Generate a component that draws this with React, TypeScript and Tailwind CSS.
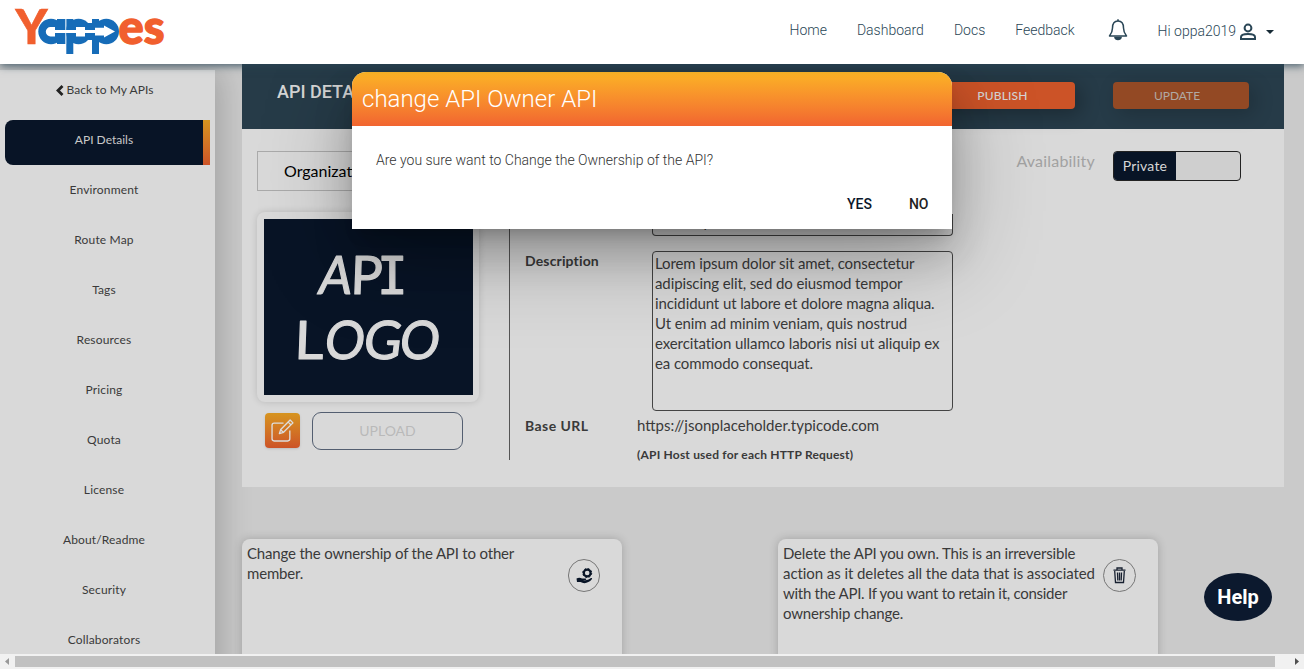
import React from "react";

const navItems = ["Environment", "Route Map", "Tags", "Resources", "Pricing", "Quota", "License", "About/Readme", "Security", "Collaborators"];

function Logo() {
  return (
    <svg width="152" height="50" viewBox="0 0 152 50" className="overflow-visible">
      <g className="font-['Lato',sans-serif] font-black" fill="#f15f2e" stroke="#f15f2e">
        <text x="1.500" y="38.500" fontSize="48" strokeWidth="0.600" textLength="32" lengthAdjust="spacingAndGlyphs">Y</text>
        <text x="104.500" y="38.500" fontSize="47" strokeWidth="1.400" textLength="46" lengthAdjust="spacingAndGlyphs">es</text>
      </g>
      <g fill="#166cb8">
        <circle cx="37" cy="26.500" r="12.700" />
        <rect x="43" y="14" width="8.300" height="25" />
        <rect x="52.300" y="14" width="7" height="35" />
        <circle cx="64.500" cy="26.500" r="12.700" />
        <rect x="78" y="14" width="7" height="35" />
        <circle cx="92.300" cy="26.500" r="12.700" />
        <rect x="70" y="18" width="12" height="17" />
      </g>
      <path d="M51.800 14v25" stroke="#a9cdea" strokeWidth=".8" />
      <path d="M41 22h-4.500a4.700 4.700 0 0 0 0 9.400H41V28h21v3.400h9V28h10v2.500h9V32.500l11-6-11-6v2.200h-9V25H71v-3h-9v3H41Z" fill="#fff" />
    </svg>
  );
}

function Bell() {
  return (
    <svg width="20" height="22" viewBox="0 0 20 22" fill="none" stroke="#2a4656" strokeWidth="1.500">
      <path d="M10 2C6 2 4.500 5 4.500 9c0 4-1 5.500-3 8h17c-2-2.500-3-4-3-8 0-4-1.500-7-5.500-7Z" strokeLinejoin="round" />
      <path d="M10 .3V2M7 18.500c.5 2.500 5.500 2.500 6 0Z" fill="#2a4656" />
    </svg>
  );
}

function EditIcon() {
  return (
    <svg width="23" height="23" viewBox="0 0 22 22" fill="none" stroke="#ddd" strokeWidth="1.300" strokeLinejoin="round">
      <path d="M12 4H3a2 2 0 0 0-2 2v13a2 2 0 0 0 2 2h13a2 2 0 0 0 2-2v-8" />
      <path d="m8 14 1.300-4 9-9 2.700 2.700-9 9L8 14ZM16.500 3l2.500 2.500M9.500 10.500l2 2" />
    </svg>
  );
}

function OwnerIcon() {
  return (
    <svg width="17" height="16" viewBox="0 0 17 16">
      <circle cx="11.200" cy="5" r="3.400" fill="none" stroke="#081426" strokeWidth="2.200" />
      <circle cx="11.200" cy="5" r="4.500" fill="none" stroke="#081426" strokeWidth="1" strokeDasharray="1.800 1.730" />
      <path d="M.5 10.500c2-1 4-.8 5.500 0h3.500c1 0 1 1.500 0 1.500H7c2 .6 4 .3 5.500-.5l2.500-1.500c1-.4 1.500.5.8 1.300C13 15 8 16.300 4.500 14H1Z" fill="#081426" />
    </svg>
  );
}

function TrashIcon() {
  return (
    <svg width="13" height="17" viewBox="0 0 13 17" fill="none" stroke="#172030" strokeWidth="1.300">
      <path d="M.5 3.200h12M4 3V1h5v2M1.700 4l.8 11.500h8L11.300 4M4.500 5.500l.3 8M6.500 5.500v8M8.500 5.500l-.3 8" />
    </svg>
  );
}

function LogoPicture() {
  return (
    <svg width="209" height="176" viewBox="0 0 209 176" fill="#d9d9d9" stroke="#d9d9d9" strokeWidth="1.200" strokeLinejoin="round" className="font-['Lato',sans-serif] text-[53px]">
      <text transform="translate(53 75) skewX(-8)" textLength="33" lengthAdjust="spacingAndGlyphs">A</text>
      <text transform="translate(86 75) skewX(-2)" textLength="32" lengthAdjust="spacingAndGlyphs">P</text>
      <text x="113" y="75" className="font-['DejaVu_Sans_Mono',monospace] text-[51px]">I</text>
      <text transform="translate(30 140) skewX(-2)" textLength="29" lengthAdjust="spacingAndGlyphs">L</text>
      <text transform="translate(59 140) skewX(-7)" textLength="40" lengthAdjust="spacingAndGlyphs">O</text>
      <text transform="translate(98 140) skewX(-7)" textLength="38" lengthAdjust="spacingAndGlyphs">G</text>
      <text transform="translate(134 140) skewX(-7)" textLength="40" lengthAdjust="spacingAndGlyphs">O</text>
    </svg>
  );
}

export default function App() {
  return (
    <div className="relative flex h-[669px] w-[1304px] flex-col overflow-hidden bg-[#cacaca] font-['Lato',sans-serif] text-[#3a3a3a]">
      <header className="relative z-10 flex h-16 shrink-0 items-start justify-between bg-white pl-[14px] pr-[30px] pt-[5px] font-['Roboto',sans-serif] text-sm font-light text-[#2a4656] shadow-[0_2px_8px_rgba(42,70,86,0.8)]">
        <Logo />
        <nav className="flex items-start pt-[15px] leading-5">
          <span className="mr-[30px]">Home</span>
          <span className="mr-[30px]">Dashboard</span>
          <span className="mr-[30px]">Docs</span>
          <span className="mr-[33px]">Feedback</span>
          <span className="-mt-px mr-[30px]"><Bell /></span>
          <span className="mt-px">Hi oppa2019</span>
          <svg className="ml-[3px] mt-[3px]" width="18" height="18" viewBox="0 0 18 18" fill="none" stroke="#2a4656" strokeWidth="2"><circle cx="9" cy="5" r="3.400" /><path d="M2 16v-2c0-4 14-4 14 0v2Z" /></svg>
          <svg className="ml-[9px] mt-[10px]" width="8" height="4" viewBox="0 0 8 4"><path d="M0 0h8L4 4Z" fill="#172b36" /></svg>
        </nav>
      </header>

      <div className="flex min-h-0 flex-1">
        <aside className="-mb-12 mt-[6px] w-[215px] shrink-0 bg-[#d9d9d9] text-center text-[12px] tracking-[0.15px] shadow-[6px_0_30px_rgba(0,0,0,0.2)]">
          <div className="flex h-10 items-center justify-center gap-[2px] pr-[5px] tracking-[0.08px]">
            <svg width="8" height="11" viewBox="0 0 8 11" fill="none" stroke="#222" strokeWidth="2.800"><path d="M6.500 1 2 5.500 6.500 10" /></svg>
            Back to My APIs
          </div>
          <div className="ml-[5px] mt-[10px] flex h-[45px] w-[205px] overflow-hidden rounded-l-lg bg-[#081426] text-[#c9c9c9]">
            <span className="flex-1 pt-[11px] leading-[18px] tracking-normal">API Details</span>
            <span className="w-[7px] bg-linear-to-b from-[#d6941f] to-[#cc5327]" />
          </div>
          <div className="pr-[7px]">
            {navItems.map((item) => <div key={item} className="h-[50px] pt-4 leading-[18px]">{item}</div>)}
          </div>
        </aside>

        <main className="ml-[27px] w-[1042px] shrink-0">
          <section className="h-[423px] bg-[#d9d9d9]">
            <div className="flex h-[65px] items-start bg-[#263b48] pl-[35px] pr-[35px] pt-[18px] font-['Roboto',sans-serif] text-[#d5d5d5]">
              <h1 className="text-[18px] font-medium leading-5">API DETAILS</h1>
              <div className="ml-auto flex gap-[38px] font-['Lato',sans-serif] text-[12px]">
                <button className="h-[27px] w-[145px] rounded bg-[#cc5327] font-medium tracking-[0.15px] shadow-[5px_5px_20px_rgba(0,0,0,0.3)]">PUBLISH</button>
                <button className="h-[27px] w-[136px] rounded bg-[#934924] pr-2 text-[#b1a9a3] shadow-[5px_5px_20px_rgba(0,0,0,0.2)]">UPDATE</button>
              </div>
            </div>
            <div className="flex h-[85px] items-start justify-between pl-[15px] pr-[43px] pt-[22px]">
              <div className="h-10 w-[250px] border border-[#aaa] pl-[26px] text-base leading-[37px] text-black">Organization</div>
              <div className="flex">
                <span className="mr-[18px] text-base leading-5 tracking-[0.2px] text-[#a2a2a2]">Availability</span>
                <div className="flex h-[30px] w-[128px] overflow-hidden rounded border border-[#222] bg-[#cfcfcf] text-sm leading-7"><span className="w-[62px] bg-[#081426] text-center tracking-[0.2px] text-[#d6d6d6]">Private</span></div>
              </div>
            </div>
            <div className="flex">
              <div className="-mt-[2px] ml-[15px] w-[222px]">
                <div className="h-[190px] rounded-lg bg-[#d9d9d9] p-[7px] shadow-[0_0_7px_rgba(0,0,0,0.15)]"><div className="h-[176px] w-[209px] bg-[#081426]"><LogoPicture /></div></div>
                <div className="mt-[10px] flex gap-3 pl-[8px]">
                  <button className="mt-px flex h-[35px] w-[35px] items-center justify-center rounded bg-linear-to-b from-[#d6941f] to-[#cc5327] shadow-sm"><EditIcon /></button>
                  <button className="h-[38px] w-[151px] rounded-[9px] border border-[#535e70] text-sm text-[#b9b9b9]">UPLOAD</button>
                </div>
              </div>
              <div className="ml-[30px] h-[246px] w-px bg-[#555]" />
              <div className="ml-[15px] w-[430px] text-[14px]">
                <div className="flex h-[37px]"><div className="ml-[127px] h-[22px] w-[301px] rounded-b border border-t-0 border-[#444] bg-[#cfcfcf] pl-0.5 text-[15px] leading-[15px]">Lorem ipsum</div></div>
                <div className="flex"><b className="w-[127px] leading-5 tracking-[0.15px]">Description</b><div className="h-[160px] w-[301px] whitespace-nowrap rounded border border-[#444] px-[2px] py-px text-[15px] leading-5 tracking-[-0.1px]">
                  <div>Lorem ipsum dolor sit amet, consectetur</div><div>adipiscing elit, sed do eiusmod tempor</div><div>incididunt ut labore et dolore magna aliqua.</div><div>Ut enim ad minim veniam, quis nostrud</div><div>exercitation ullamco laboris nisi ut aliquip ex</div><div>ea commodo consequat.</div>
                </div></div>
                <div className="mt-[5px] flex leading-5"><b className="w-[112px] tracking-[0.45px]">Base URL</b><span className="-mt-px text-[15px]">https://jsonplaceholder.typicode.com</span></div>
                <div className="ml-[112px] mt-[9px] text-[12px] font-bold leading-5 tracking-[0.2px]">(API Host used for each HTTP Request)</div>
              </div>
            </div>
          </section>
          <div className="mt-[52px] flex gap-[156px] whitespace-nowrap text-[15px] leading-5 tracking-[-0.18px]">
            <div className="flex h-[180px] w-[380px] items-start rounded-lg bg-[#d9d9d9] pl-[5px] pt-1 shadow-[0_0_10px_rgba(0,0,0,0.2)]"><div className="w-[321px]"><div>Change the ownership of the API to other</div><div>member.</div></div><span className="mt-4 flex h-[33px] w-8 items-center justify-center rounded-full border border-[#777]"><OwnerIcon /></span></div>
            <div className="flex h-[180px] w-[380px] items-start rounded-lg bg-[#d9d9d9] pl-[5px] pt-1 shadow-[0_0_10px_rgba(0,0,0,0.2)]"><div className="w-[320px]"><div>Delete the API you own. This is an irreversible</div><div className="tracking-[-0.07px]">action as it deletes all the data that is associated</div><div className="tracking-[-0.27px]">with the API. If you want to retain it, consider</div><div>ownership change.</div></div><span className="mt-4 flex h-[33px] w-[33px] items-center justify-center rounded-full border border-[#777]"><TrashIcon /></span></div>
          </div>
        </main>
      </div>

      <button className="absolute left-[1204px] top-[573px] z-30 h-12 w-[68px] rounded-[50%] bg-[#0c192e] font-['Roboto',sans-serif] text-xl font-bold text-white">Help</button>

      <div role="dialog" className="absolute left-[352px] top-[72px] z-[5] h-[157px] w-[600px] rounded-t-[14px] bg-white font-['Roboto',sans-serif] shadow-[0_11px_15px_-7px_rgba(0,0,0,0.2),0_24px_38px_3px_rgba(0,0,0,0.14),0_25px_90px_rgba(0,0,0,0.28)]">
        <h2 className="h-[54px] rounded-t-[14px] bg-linear-to-b from-[#fbb324] to-[#f16430] pl-[10px] text-2xl font-light leading-[54px] text-white">change API Owner API</h2>
        <p className="pl-6 pt-6 text-sm font-light leading-5 text-[#333]">Are you sure want to Change the Ownership of the API?</p>
        <div className="mt-6 flex justify-end gap-[37px] pr-[23.500px] text-sm font-medium leading-5 text-[#0b172b]"><button>YES</button><button className="text-[#222]">NO</button></div>
      </div>

      <div className="z-40 flex h-[15px] shrink-0 items-center bg-[#f1f1f1]">
        <svg width="15" height="15"><path d="M9 4v7L5 7.500Z" fill="#999" /></svg>
        <div className="h-[11px] w-[1260px] bg-[#c1c1c1]" />
        <svg className="ml-auto" width="15" height="15"><path d="M6 4v7l4-3.500Z" fill="#505050" /></svg>
      </div>
    </div>
  );
}
